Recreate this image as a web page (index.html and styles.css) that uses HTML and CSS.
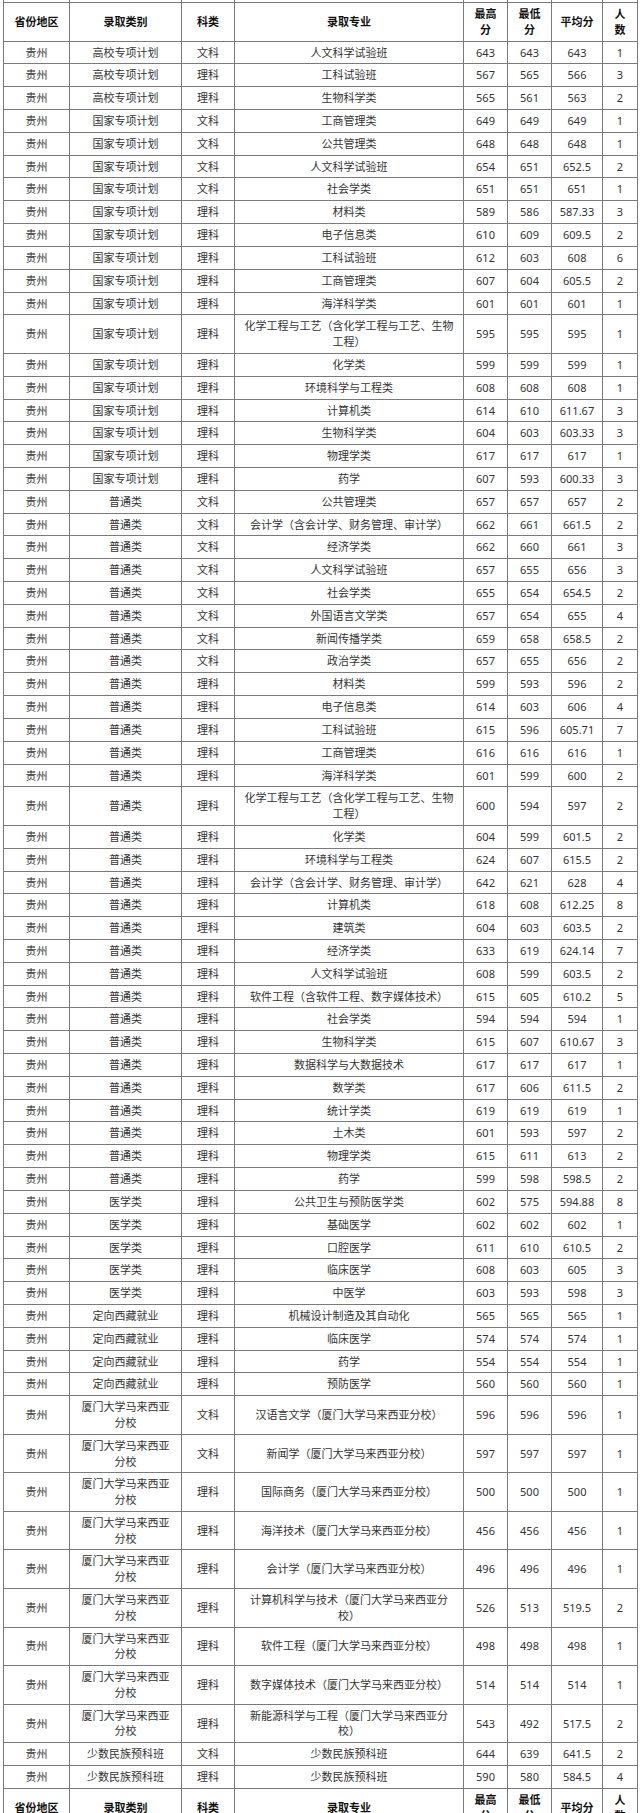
FILE: index.html
```html
<!DOCTYPE html>
<html lang="zh-CN">
<head>
<meta charset="utf-8">
<title>录取分数</title>
<link rel="stylesheet" href="styles.css">
</head>
<body>
<div class="page">
<table class="scores">
<colgroup>
<col class="c-prov"><col class="c-type"><col class="c-subj"><col class="c-major"><col class="c-max"><col class="c-min"><col class="c-avg"><col class="c-num">
</colgroup>
<tbody>
<tr class="stub"><td></td><td></td><td></td><td></td><td></td><td></td><td></td><td></td></tr>
<tr class="head"><th>省份地区</th><th>录取类别</th><th>科类</th><th>录取专业</th><th>最高分</th><th>最低分</th><th>平均分</th><th>人数</th></tr>
<tr><td>贵州</td><td>高校专项计划</td><td>文科</td><td>人文科学试验班</td><td>643</td><td>643</td><td>643</td><td>1</td></tr>
<tr><td>贵州</td><td>高校专项计划</td><td>理科</td><td>工科试验班</td><td>567</td><td>565</td><td>566</td><td>3</td></tr>
<tr><td>贵州</td><td>高校专项计划</td><td>理科</td><td>生物科学类</td><td>565</td><td>561</td><td>563</td><td>2</td></tr>
<tr><td>贵州</td><td>国家专项计划</td><td>文科</td><td>工商管理类</td><td>649</td><td>649</td><td>649</td><td>1</td></tr>
<tr><td>贵州</td><td>国家专项计划</td><td>文科</td><td>公共管理类</td><td>648</td><td>648</td><td>648</td><td>1</td></tr>
<tr><td>贵州</td><td>国家专项计划</td><td>文科</td><td>人文科学试验班</td><td>654</td><td>651</td><td>652.5</td><td>2</td></tr>
<tr><td>贵州</td><td>国家专项计划</td><td>文科</td><td>社会学类</td><td>651</td><td>651</td><td>651</td><td>1</td></tr>
<tr><td>贵州</td><td>国家专项计划</td><td>理科</td><td>材料类</td><td>589</td><td>586</td><td>587.33</td><td>3</td></tr>
<tr><td>贵州</td><td>国家专项计划</td><td>理科</td><td>电子信息类</td><td>610</td><td>609</td><td>609.5</td><td>2</td></tr>
<tr><td>贵州</td><td>国家专项计划</td><td>理科</td><td>工科试验班</td><td>612</td><td>603</td><td>608</td><td>6</td></tr>
<tr><td>贵州</td><td>国家专项计划</td><td>理科</td><td>工商管理类</td><td>607</td><td>604</td><td>605.5</td><td>2</td></tr>
<tr><td>贵州</td><td>国家专项计划</td><td>理科</td><td>海洋科学类</td><td>601</td><td>601</td><td>601</td><td>1</td></tr>
<tr><td>贵州</td><td>国家专项计划</td><td>理科</td><td>化学工程与工艺（含化学工程与工艺、生物工程）</td><td>595</td><td>595</td><td>595</td><td>1</td></tr>
<tr><td>贵州</td><td>国家专项计划</td><td>理科</td><td>化学类</td><td>599</td><td>599</td><td>599</td><td>1</td></tr>
<tr><td>贵州</td><td>国家专项计划</td><td>理科</td><td>环境科学与工程类</td><td>608</td><td>608</td><td>608</td><td>1</td></tr>
<tr><td>贵州</td><td>国家专项计划</td><td>理科</td><td>计算机类</td><td>614</td><td>610</td><td>611.67</td><td>3</td></tr>
<tr><td>贵州</td><td>国家专项计划</td><td>理科</td><td>生物科学类</td><td>604</td><td>603</td><td>603.33</td><td>3</td></tr>
<tr><td>贵州</td><td>国家专项计划</td><td>理科</td><td>物理学类</td><td>617</td><td>617</td><td>617</td><td>1</td></tr>
<tr><td>贵州</td><td>国家专项计划</td><td>理科</td><td>药学</td><td>607</td><td>593</td><td>600.33</td><td>3</td></tr>
<tr><td>贵州</td><td>普通类</td><td>文科</td><td>公共管理类</td><td>657</td><td>657</td><td>657</td><td>2</td></tr>
<tr><td>贵州</td><td>普通类</td><td>文科</td><td>会计学（含会计学、财务管理、审计学）</td><td>662</td><td>661</td><td>661.5</td><td>2</td></tr>
<tr><td>贵州</td><td>普通类</td><td>文科</td><td>经济学类</td><td>662</td><td>660</td><td>661</td><td>3</td></tr>
<tr><td>贵州</td><td>普通类</td><td>文科</td><td>人文科学试验班</td><td>657</td><td>655</td><td>656</td><td>3</td></tr>
<tr><td>贵州</td><td>普通类</td><td>文科</td><td>社会学类</td><td>655</td><td>654</td><td>654.5</td><td>2</td></tr>
<tr><td>贵州</td><td>普通类</td><td>文科</td><td>外国语言文学类</td><td>657</td><td>654</td><td>655</td><td>4</td></tr>
<tr><td>贵州</td><td>普通类</td><td>文科</td><td>新闻传播学类</td><td>659</td><td>658</td><td>658.5</td><td>2</td></tr>
<tr><td>贵州</td><td>普通类</td><td>文科</td><td>政治学类</td><td>657</td><td>655</td><td>656</td><td>2</td></tr>
<tr><td>贵州</td><td>普通类</td><td>理科</td><td>材料类</td><td>599</td><td>593</td><td>596</td><td>2</td></tr>
<tr><td>贵州</td><td>普通类</td><td>理科</td><td>电子信息类</td><td>614</td><td>603</td><td>606</td><td>4</td></tr>
<tr><td>贵州</td><td>普通类</td><td>理科</td><td>工科试验班</td><td>615</td><td>596</td><td>605.71</td><td>7</td></tr>
<tr><td>贵州</td><td>普通类</td><td>理科</td><td>工商管理类</td><td>616</td><td>616</td><td>616</td><td>1</td></tr>
<tr><td>贵州</td><td>普通类</td><td>理科</td><td>海洋科学类</td><td>601</td><td>599</td><td>600</td><td>2</td></tr>
<tr><td>贵州</td><td>普通类</td><td>理科</td><td>化学工程与工艺（含化学工程与工艺、生物工程）</td><td>600</td><td>594</td><td>597</td><td>2</td></tr>
<tr><td>贵州</td><td>普通类</td><td>理科</td><td>化学类</td><td>604</td><td>599</td><td>601.5</td><td>2</td></tr>
<tr><td>贵州</td><td>普通类</td><td>理科</td><td>环境科学与工程类</td><td>624</td><td>607</td><td>615.5</td><td>2</td></tr>
<tr><td>贵州</td><td>普通类</td><td>理科</td><td>会计学（含会计学、财务管理、审计学）</td><td>642</td><td>621</td><td>628</td><td>4</td></tr>
<tr><td>贵州</td><td>普通类</td><td>理科</td><td>计算机类</td><td>618</td><td>608</td><td>612.25</td><td>8</td></tr>
<tr><td>贵州</td><td>普通类</td><td>理科</td><td>建筑类</td><td>604</td><td>603</td><td>603.5</td><td>2</td></tr>
<tr><td>贵州</td><td>普通类</td><td>理科</td><td>经济学类</td><td>633</td><td>619</td><td>624.14</td><td>7</td></tr>
<tr><td>贵州</td><td>普通类</td><td>理科</td><td>人文科学试验班</td><td>608</td><td>599</td><td>603.5</td><td>2</td></tr>
<tr><td>贵州</td><td>普通类</td><td>理科</td><td>软件工程（含软件工程、数字媒体技术）</td><td>615</td><td>605</td><td>610.2</td><td>5</td></tr>
<tr><td>贵州</td><td>普通类</td><td>理科</td><td>社会学类</td><td>594</td><td>594</td><td>594</td><td>1</td></tr>
<tr><td>贵州</td><td>普通类</td><td>理科</td><td>生物科学类</td><td>615</td><td>607</td><td>610.67</td><td>3</td></tr>
<tr><td>贵州</td><td>普通类</td><td>理科</td><td>数据科学与大数据技术</td><td>617</td><td>617</td><td>617</td><td>1</td></tr>
<tr><td>贵州</td><td>普通类</td><td>理科</td><td>数学类</td><td>617</td><td>606</td><td>611.5</td><td>2</td></tr>
<tr><td>贵州</td><td>普通类</td><td>理科</td><td>统计学类</td><td>619</td><td>619</td><td>619</td><td>1</td></tr>
<tr><td>贵州</td><td>普通类</td><td>理科</td><td>土木类</td><td>601</td><td>593</td><td>597</td><td>2</td></tr>
<tr><td>贵州</td><td>普通类</td><td>理科</td><td>物理学类</td><td>615</td><td>611</td><td>613</td><td>2</td></tr>
<tr><td>贵州</td><td>普通类</td><td>理科</td><td>药学</td><td>599</td><td>598</td><td>598.5</td><td>2</td></tr>
<tr><td>贵州</td><td>医学类</td><td>理科</td><td>公共卫生与预防医学类</td><td>602</td><td>575</td><td>594.88</td><td>8</td></tr>
<tr><td>贵州</td><td>医学类</td><td>理科</td><td>基础医学</td><td>602</td><td>602</td><td>602</td><td>1</td></tr>
<tr><td>贵州</td><td>医学类</td><td>理科</td><td>口腔医学</td><td>611</td><td>610</td><td>610.5</td><td>2</td></tr>
<tr><td>贵州</td><td>医学类</td><td>理科</td><td>临床医学</td><td>608</td><td>603</td><td>605</td><td>3</td></tr>
<tr><td>贵州</td><td>医学类</td><td>理科</td><td>中医学</td><td>603</td><td>593</td><td>598</td><td>3</td></tr>
<tr><td>贵州</td><td>定向西藏就业</td><td>理科</td><td>机械设计制造及其自动化</td><td>565</td><td>565</td><td>565</td><td>1</td></tr>
<tr><td>贵州</td><td>定向西藏就业</td><td>理科</td><td>临床医学</td><td>574</td><td>574</td><td>574</td><td>1</td></tr>
<tr><td>贵州</td><td>定向西藏就业</td><td>理科</td><td>药学</td><td>554</td><td>554</td><td>554</td><td>1</td></tr>
<tr><td>贵州</td><td>定向西藏就业</td><td>理科</td><td>预防医学</td><td>560</td><td>560</td><td>560</td><td>1</td></tr>
<tr><td>贵州</td><td>厦门大学马来西亚分校</td><td>文科</td><td>汉语言文学（厦门大学马来西亚分校）</td><td>596</td><td>596</td><td>596</td><td>1</td></tr>
<tr><td>贵州</td><td>厦门大学马来西亚分校</td><td>文科</td><td>新闻学（厦门大学马来西亚分校）</td><td>597</td><td>597</td><td>597</td><td>1</td></tr>
<tr><td>贵州</td><td>厦门大学马来西亚分校</td><td>理科</td><td>国际商务（厦门大学马来西亚分校）</td><td>500</td><td>500</td><td>500</td><td>1</td></tr>
<tr><td>贵州</td><td>厦门大学马来西亚分校</td><td>理科</td><td>海洋技术（厦门大学马来西亚分校）</td><td>456</td><td>456</td><td>456</td><td>1</td></tr>
<tr><td>贵州</td><td>厦门大学马来西亚分校</td><td>理科</td><td>会计学（厦门大学马来西亚分校）</td><td>496</td><td>496</td><td>496</td><td>1</td></tr>
<tr><td>贵州</td><td>厦门大学马来西亚分校</td><td>理科</td><td>计算机科学与技术（厦门大学马来西亚分校）</td><td>526</td><td>513</td><td>519.5</td><td>2</td></tr>
<tr><td>贵州</td><td>厦门大学马来西亚分校</td><td>理科</td><td>软件工程（厦门大学马来西亚分校）</td><td>498</td><td>498</td><td>498</td><td>1</td></tr>
<tr><td>贵州</td><td>厦门大学马来西亚分校</td><td>理科</td><td>数字媒体技术（厦门大学马来西亚分校）</td><td>514</td><td>514</td><td>514</td><td>1</td></tr>
<tr><td>贵州</td><td>厦门大学马来西亚分校</td><td>理科</td><td>新能源科学与工程（厦门大学马来西亚分校）</td><td>543</td><td>492</td><td>517.5</td><td>2</td></tr>
<tr><td>贵州</td><td>少数民族预科班</td><td>文科</td><td>少数民族预科班</td><td>644</td><td>639</td><td>641.5</td><td>2</td></tr>
<tr><td>贵州</td><td>少数民族预科班</td><td>理科</td><td>少数民族预科班</td><td>590</td><td>580</td><td>584.5</td><td>4</td></tr>
<tr class="head"><th>省份地区</th><th>录取类别</th><th>科类</th><th>录取专业</th><th>最高分</th><th>最低分</th><th>平均分</th><th>人数</th></tr>
</tbody>
</table>
</div>
</body>
</html>
```
FILE: styles.css
```css
html, body {
  margin: 0;
  padding: 0;
  background: #fff;
}

.page {
  height: 1813px;
  overflow: hidden;
  padding-left: 3px;
}

.scores {
  border-collapse: collapse;
  table-layout: fixed;
  width: 634px;
  font-family: "Noto Sans", "Noto Sans CJK SC", sans-serif;
  font-size: 11px;
  line-height: 15.75px;
  color: #333;
}

.c-prov { width: 66px; }
.c-type { width: 112px; }
.c-subj { width: 53px; }
.c-major { width: 229px; }
.c-max { width: 44px; }
.c-min { width: 44px; }
.c-avg { width: 51px; }
.c-num { width: 35px; }

.scores td,
.scores th {
  border: 1px solid #7a7a7a;
  padding: 3.04px 7px;
  text-align: center;
  vertical-align: middle;
}

.scores th {
  font-weight: bold;
  color: #111;
}

.stub td {
  height: 2px;
  padding: 0;
  border-top: none;
  font-size: 0;
  line-height: 0;
}
```
